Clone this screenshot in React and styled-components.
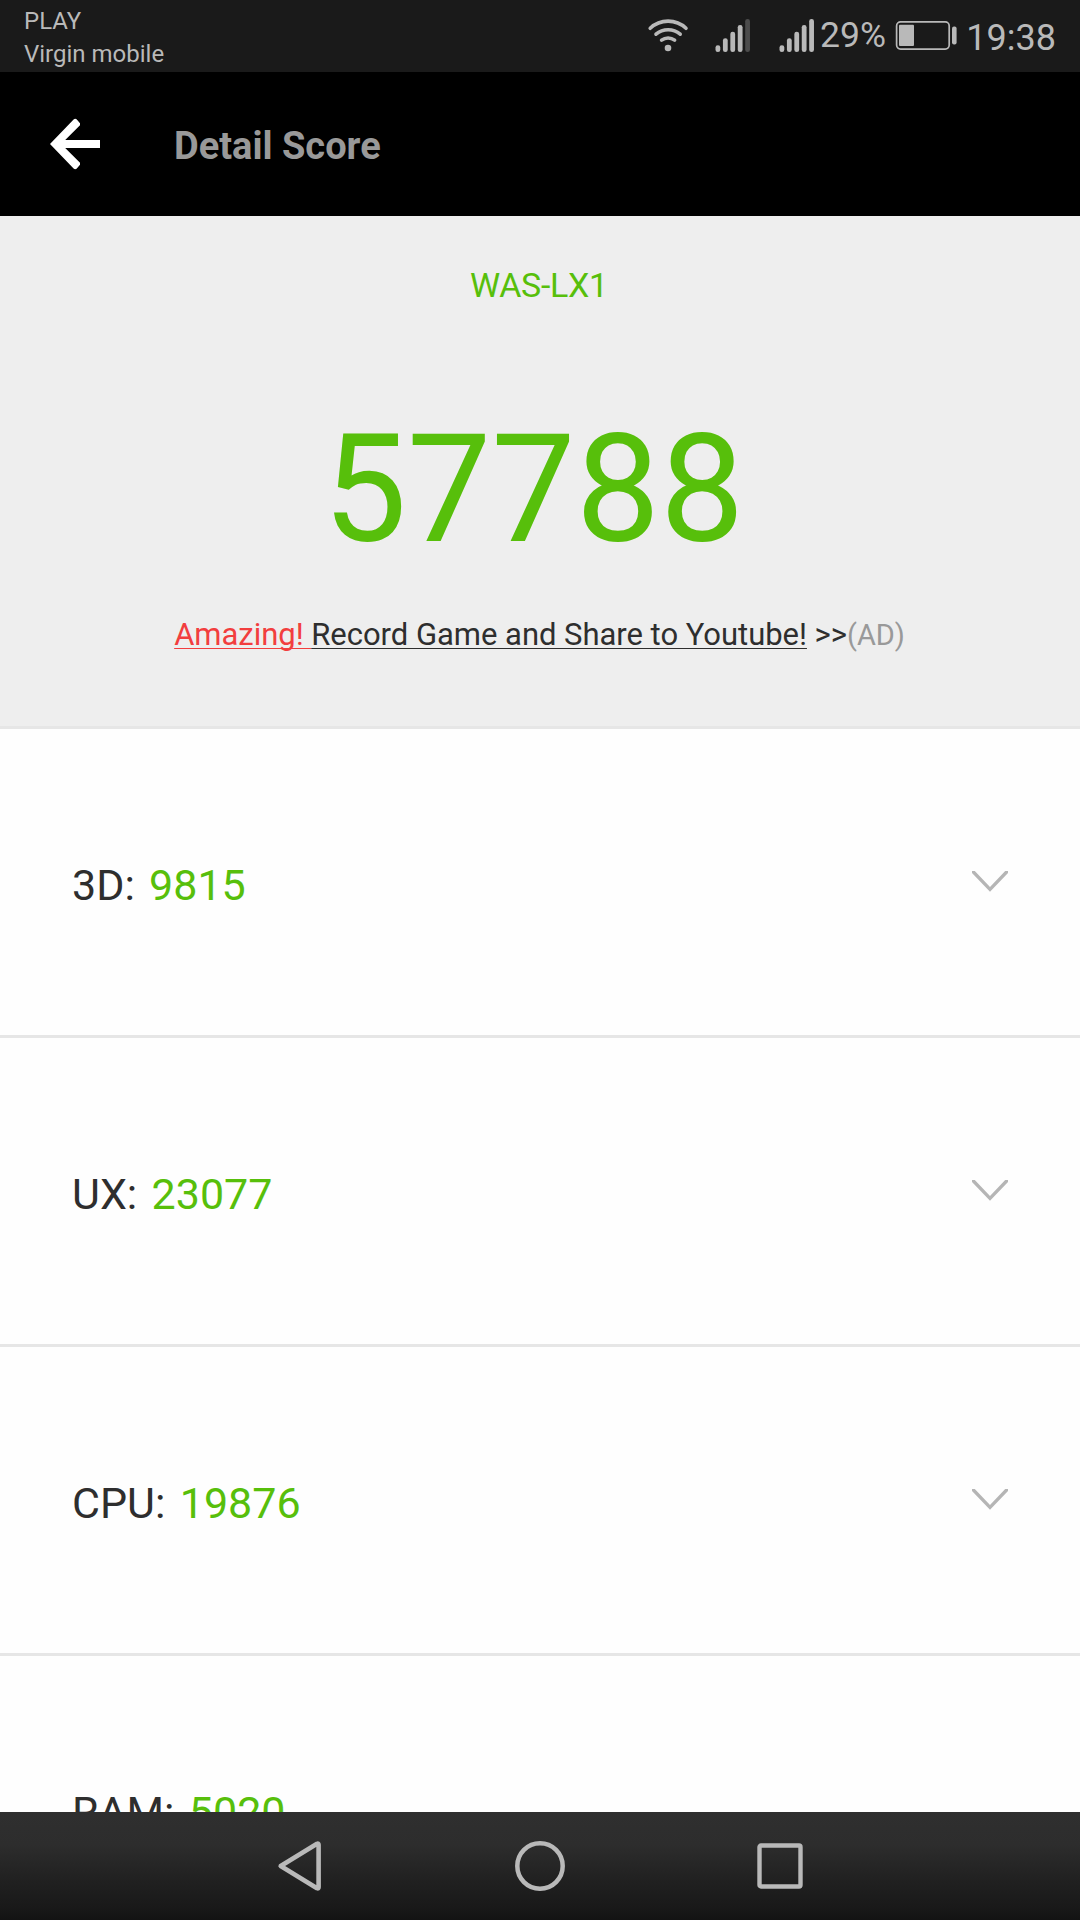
import React from "react";
import styled, { createGlobalStyle } from "styled-components";

const GREEN = "#57bf0b";
const INK = "#2e2e2e";
const ICON = "#b9b9b9";

const GlobalStyle = createGlobalStyle`
  * { box-sizing: border-box; }
  body { margin: 0; background: #fff; }
`;

const Screen = styled.div`
  width: 1080px;
  height: 1920px;
  display: flex;
  flex-direction: column;
  overflow: hidden;
  background: #fefefe;
  font-family: Roboto, "Noto Sans", sans-serif;
  white-space: nowrap;
`;

const StatusBar = styled.header`
  flex: none;
  height: 72px;
  display: flex;
  justify-content: space-between;
  padding: 0 24px;
  background: #1a1a1a;
  color: ${ICON};
`;

const Carriers = styled.div`
  padding-top: 5px;
  font-size: 24px;
  line-height: 33px;
`;

const StatusIcons = styled.div`
  display: flex;
  align-items: flex-start;
  svg { display: block; flex: none; }
`;

const StatusText = styled.span`
  width: ${(p) => p.$width}px;
  padding-top: ${(p) => p.$top}px;
  font-size: ${(p) => p.$size}px;
  line-height: 40px;
  text-align: ${(p) => p.$align};
`;

const AppBar = styled.div`
  flex: none;
  height: 144px;
  display: flex;
  align-items: center;
  gap: 72px;
  padding-left: 50px;
  background: #000;
`;

const BackButton = styled.button`
  display: flex;
  padding: 0;
  border: 0;
  background: none;
`;

const Title = styled.h1`
  margin: 0;
  padding-top: 4px;
  font-size: 38px;
  line-height: 44px;
  font-weight: 700;
  color: #999;
`;

const Summary = styled.section`
  flex: none;
  height: 513px;
  display: flex;
  flex-direction: column;
  align-items: center;
  padding-top: 49px;
  background: #eee;
  border-bottom: 3px solid #e6e6e6;
`;

const Device = styled.div`
  font-size: 34px;
  line-height: 40px;
  letter-spacing: -0.3px;
  color: ${GREEN};
  margin-left: -2px;
`;

const Total = styled.div`
  margin-top: 95px;
  margin-left: -13px;
  font-size: 150px;
  line-height: 180px;
  color: ${GREEN};
`;

const Promo = styled.p`
  margin: 35px 0 0 -1px;
  display: flex;
  font-size: 31px;
  line-height: 40px;
  letter-spacing: -0.03px;
  color: ${INK};
`;

const PromoLink = styled.span`
  color: ${(p) => p.$color};
  text-decoration: underline;
  text-decoration-thickness: 1px;
  text-underline-offset: 3px;
  text-decoration-skip-ink: none;
  white-space: pre;
`;

const Pointer = styled.span`
  white-space: pre;
`;

const AdTag = styled.span`
  font-size: 29px;
  color: #999;
`;

const List = styled.main`
  flex: 1;
  min-height: 0;
  overflow: hidden;
`;

const Row = styled.div`
  height: 309px;
  display: flex;
  align-items: center;
  justify-content: space-between;
  padding: 0 72px;
  border-bottom: 3px solid #e6e6e6;
`;

const RowText = styled.div`
  display: flex;
  gap: 14.3px;
  padding-top: 6px;
  font-size: 43px;
  line-height: 50px;
  color: ${INK};
`;

const Value = styled.span`
  color: ${GREEN};
`;

const NavBar = styled.nav`
  flex: none;
  height: 108px;
  display: grid;
  grid-template-columns: repeat(3, 240px);
  justify-content: center;
  align-items: center;
  justify-items: center;
  background: linear-gradient(#2f2f2f 0, #2d2d2d 30%, #202020 65%, #191919 88%, #131313 100%);
  svg { display: block; }
`;

const Wifi = () => (
  <svg width="42" height="72" viewBox="647 0 42 72" fill="none" stroke={ICON} strokeWidth="3.6" strokeLinecap="round">
    <path d="M650.2 28.3a26 26 0 0 1 35.8 0M656 34.2a18.5 18.5 0 0 1 24.2 0M661.6 40.2a10.5 10.5 0 0 1 13 0" />
    <circle cx="668" cy="48" r="3.3" fill={ICON} stroke="none" />
  </svg>
);

const BARS = [45.3, 38.3, 31.7, 25, 19];

const Signal = ({ level }) => (
  <svg width="35" height="72" viewBox="0 0 35 72">
    {BARS.map((top, i) => (
      <rect key={top} x={0.5 + i * 7.42} y={top} width="4.8" height={52 - top} rx="2.3" fill={i < level ? ICON : "#4c4c4c"} />
    ))}
  </svg>
);

const Battery = () => (
  <svg width="62" height="72" viewBox="895 0 62 72">
    <rect x="896.6" y="21.9" width="52.6" height="27.2" rx="4" fill="none" stroke={ICON} strokeWidth="1.7" />
    <rect x="899" y="24.7" width="15" height="21.3" rx="1" fill={ICON} />
    <rect x="952" y="26.5" width="4.6" height="18" rx="2" fill={ICON} />
  </svg>
);

const BackArrow = () => (
  <svg width="52" height="52" viewBox="0 0 52 52">
    <path fill="#fff" d="M50 22H15.2L30 7.2V5.2L26.6 1.3Q25 .3 23.6 1.6L0 26l23.6 24.4q1.4 1.3 3 .3L30 46.8v-2L15.2 30H50z" />
  </svg>
);

const Chevron = () => (
  <svg width="36" height="22" viewBox="0 0 36 22">
    <path fill="#b5b5b5" d="M0 0h2.8L18 16 33.2 0H36v2L18 20.7 0 2z" />
  </svg>
);

const SCORES = [
  { label: "3D:", value: "9815", expandable: true },
  { label: "UX:", value: "23077", expandable: true },
  { label: "CPU:", value: "19876", expandable: true },
  { label: "RAM:", value: "5020", expandable: false },
];

const Gap = styled.span`
  flex: none;
  width: ${(p) => p.$w}px;
`;

export default function App() {
  return (
    <Screen>
      <GlobalStyle />
      <StatusBar>
        <Carriers>
          <div>PLAY</div>
          <div>Virgin mobile</div>
        </Carriers>
        <StatusIcons>
          <Wifi />
          <Gap $w={26} />
          <Signal level={4} />
          <Gap $w={29} />
          <Signal level={5} />
          <Gap $w={6} />
          <StatusText $width={75} $top={15} $size={35.5} $align="left">29%</StatusText>
          <Battery />
          <StatusText $width={99} $top={18} $size={36} $align="right">19:38</StatusText>
        </StatusIcons>
      </StatusBar>

      <AppBar>
        <BackButton aria-label="Back">
          <BackArrow />
        </BackButton>
        <Title>Detail Score</Title>
      </AppBar>

      <Summary>
        <Device>WAS-LX1</Device>
        <Total>57788</Total>
        <Promo>
          <PromoLink $color="#f23e3e">Amazing! </PromoLink>
          <PromoLink $color={INK}>Record Game and Share to Youtube!</PromoLink>
          <Pointer>{" >>"}</Pointer>
          <AdTag>(AD)</AdTag>
        </Promo>
      </Summary>

      <List>
        {SCORES.map(({ label, value, expandable }) => (
          <Row key={label}>
            <RowText>
              <span>{label}</span>
              <Value>{value}</Value>
            </RowText>
            {expandable && <Chevron />}
          </Row>
        ))}
      </List>

      <NavBar>
        <svg width="50" height="54" viewBox="275 1839 50 54">
          <path d="M280.7 1866L317 1843.8q1.6-.6 1.6 1v42.4q0 1.6-1.6 1z" fill="none" stroke={ICON} strokeWidth="4.6" strokeLinejoin="round" />
        </svg>
        <svg width="52" height="52" viewBox="0 0 52 52">
          <circle cx="26" cy="26" r="22.7" fill="none" stroke={ICON} strokeWidth="4.5" />
        </svg>
        <svg width="46" height="46" viewBox="0 0 46 46">
          <rect x="2.5" y="2.5" width="41" height="41" rx="1.5" fill="none" stroke={ICON} strokeWidth="4.4" />
        </svg>
      </NavBar>
    </Screen>
  );
}
